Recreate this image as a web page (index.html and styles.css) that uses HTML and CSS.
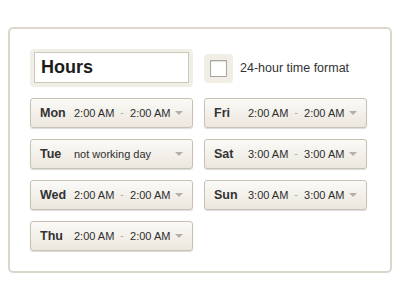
FILE: index.html
```html
<!DOCTYPE html>
<html lang="en">
<head>
  <meta charset="UTF-8">
  <meta name="viewport" content="width=device-width, initial-scale=1.0">
  <link rel="stylesheet" href="styles.css">
</head>
<body>

<div class="card">
  <div class="grid">
    <div class="title-frame">
      <div class="title-box">Hours</div>
    </div>
    <div class="format">
      <div class="check-frame"><span class="check"></span></div>
      <span class="format-label">24-hour time format</span>
    </div>

    <div class="day"><span class="day-name">Mon</span><span class="time">2:00 AM</span><span class="dash">-</span><span class="time">2:00 AM</span><span class="arrow"></span></div>
    <div class="day"><span class="day-name">Fri</span><span class="time">2:00 AM</span><span class="dash">-</span><span class="time">2:00 AM</span><span class="arrow"></span></div>

    <div class="day"><span class="day-name">Tue</span><span class="time">not working day</span><span class="arrow"></span></div>
    <div class="day"><span class="day-name">Sat</span><span class="time">3:00 AM</span><span class="dash">-</span><span class="time">3:00 AM</span><span class="arrow"></span></div>

    <div class="day"><span class="day-name">Wed</span><span class="time">2:00 AM</span><span class="dash">-</span><span class="time">2:00 AM</span><span class="arrow"></span></div>
    <div class="day"><span class="day-name">Sun</span><span class="time">3:00 AM</span><span class="dash">-</span><span class="time">3:00 AM</span><span class="arrow"></span></div>

    <div class="day"><span class="day-name">Thu</span><span class="time">2:00 AM</span><span class="dash">-</span><span class="time">2:00 AM</span><span class="arrow"></span></div>
  </div>
</div>

</body>
</html>
```

FILE: styles.css
```css
body {
  margin: 0;
  padding: 27px 8px 0 8px;
  background: #fff;
  font-family: 'Liberation Sans', Arial, sans-serif;
  color: #2e2e2e;
}

.card {
  width: 384px;
  height: 246px;
  box-sizing: border-box;
  border: 2px solid #dbd7cc;
  border-radius: 5px;
  padding: 20px;
}

.grid {
  display: grid;
  grid-template-columns: 163px 163px;
  grid-template-rows: 38px repeat(4, 30px);
  gap: 11px;
}

.title-frame {
  background-color: #f1eee6;
  border-radius: 4px;
  padding: 3px 4px 4px 4px;
}

.title-box {
  height: 100%;
  box-sizing: border-box;
  background-color: #fff;
  border: 1px solid #cdc8bc;
  padding-left: 6px;
  font-size: 18px;
  font-weight: bold;
  color: #1c1c1c;
  display: flex;
  align-items: center;
}

.format {
  display: flex;
  align-items: center;
}

.check-frame {
  width: 29px;
  height: 29px;
  box-sizing: border-box;
  padding: 6px;
  background-color: #f1eee6;
  border-radius: 4px;
  margin-right: 7px;
}

.check {
  display: block;
  width: 17px;
  height: 17px;
  box-sizing: border-box;
  background-color: #fff;
  border: 1px solid #a9a6a0;
  box-shadow: inset 0 1px 1px rgba(0, 0, 0, 0.12);
}

.format-label {
  font-size: 12.5px;
  color: #333;
}

.day {
  display: flex;
  align-items: center;
  box-sizing: border-box;
  height: 30px;
  padding: 0 9px;
  border: 1px solid #c8c2b4;
  border-radius: 3px;
  background: linear-gradient(to bottom, #fbfaf7, #ece7de);
  box-shadow: 0 1px 1px rgba(0, 0, 0, 0.14);
  font-size: 11px;
  color: #2e2e2e;
}

.day-name {
  width: 34px;
  flex-shrink: 0;
  font-size: 12.5px;
  font-weight: bold;
  color: #333;
}

.dash {
  color: #aaa;
  margin: 0 6px;
  position: relative;
  top: -1px;
}

.arrow {
  margin-left: auto;
  width: 0;
  height: 0;
  border-left: 4px solid transparent;
  border-right: 4px solid transparent;
  border-top: 4px solid #b3b0aa;
}
```
